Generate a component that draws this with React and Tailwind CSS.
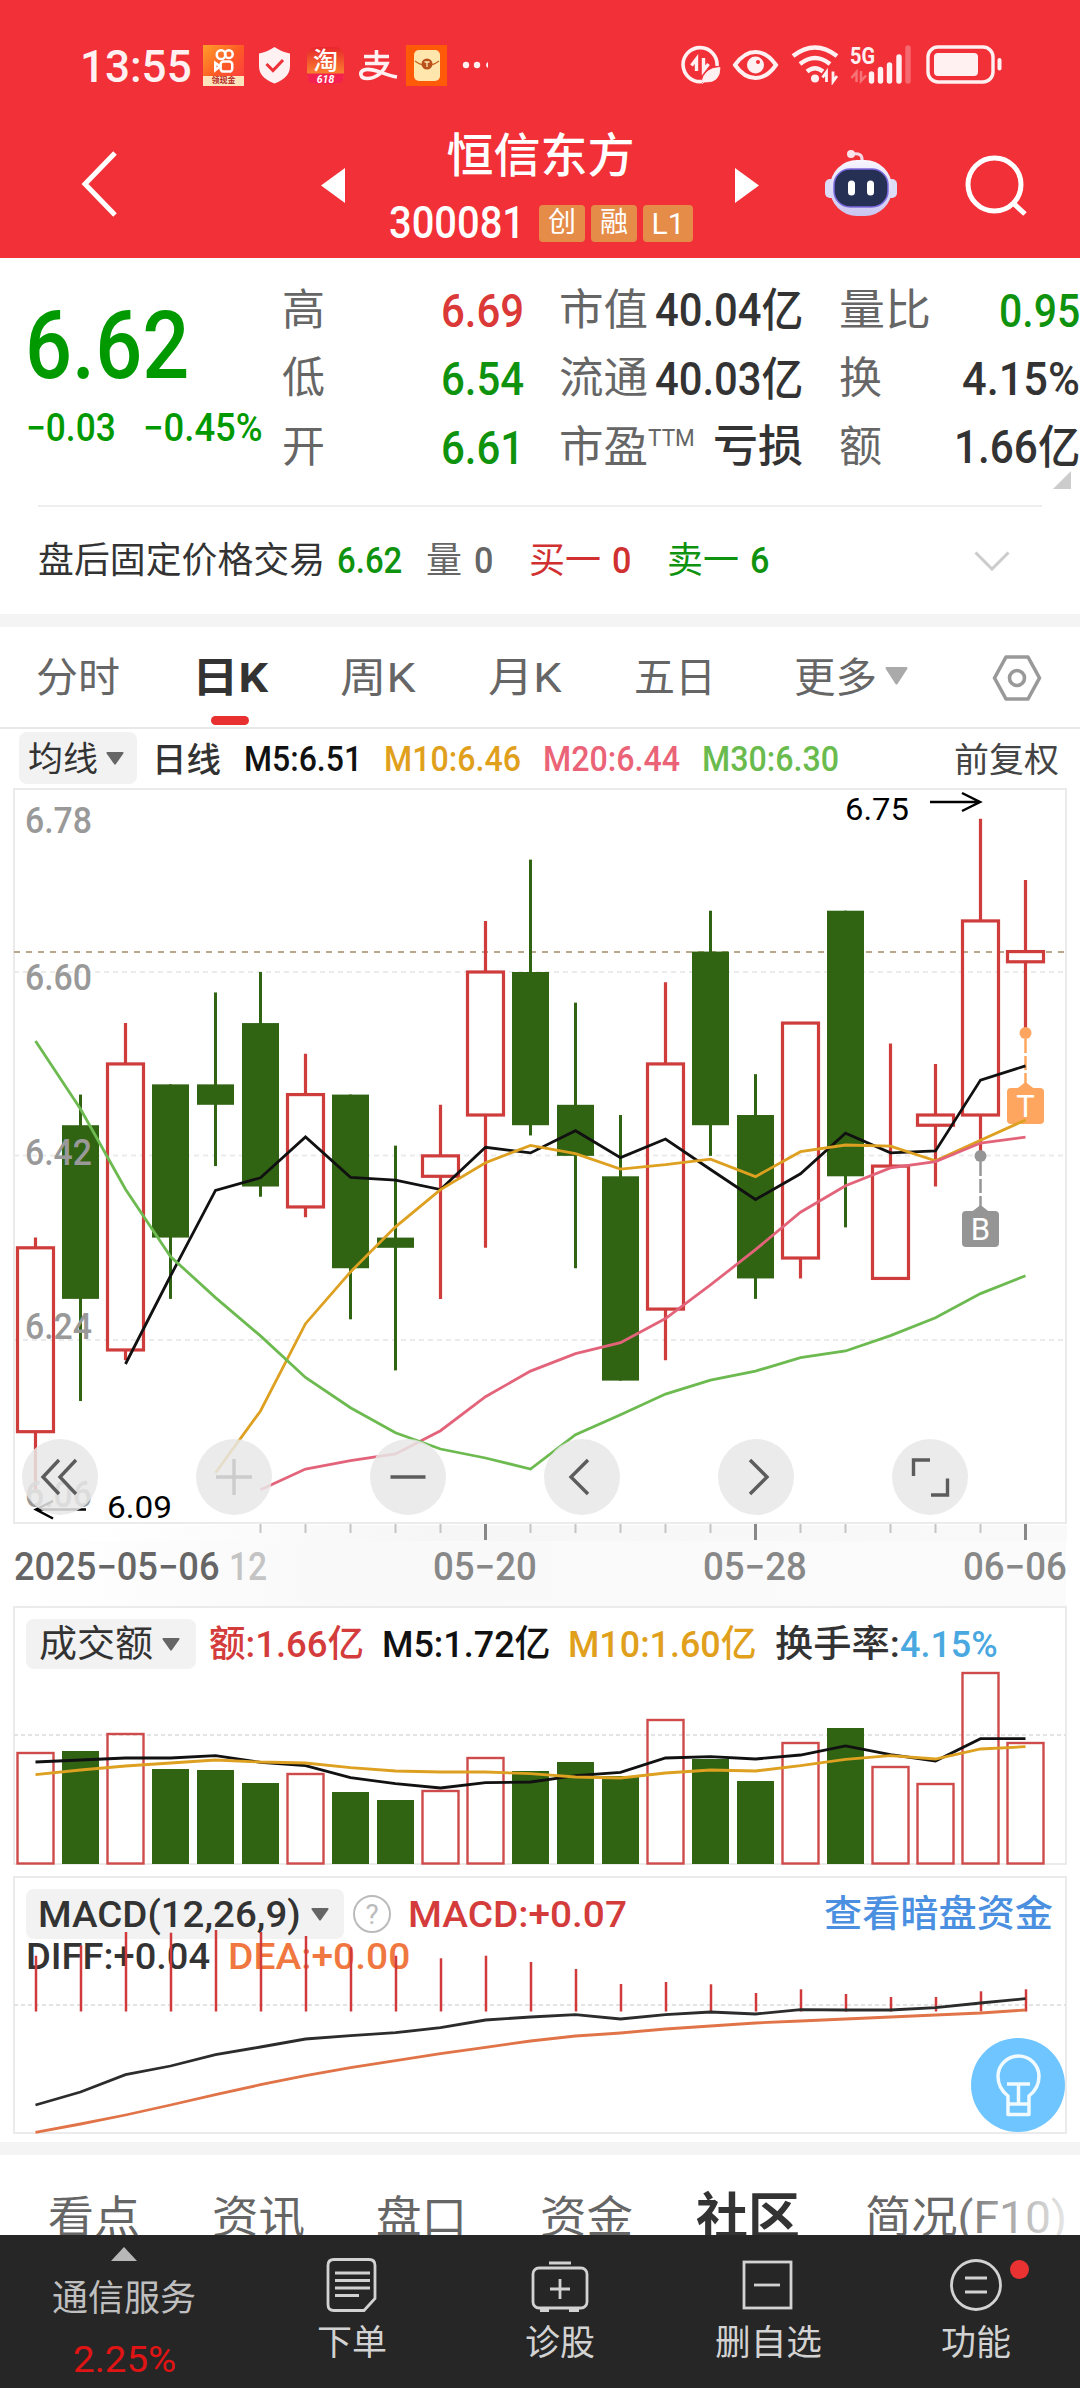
import { useLayoutEffect, useRef } from "react";

// [high, bodyTop, bodyBottom, low, isUp] in cents
const candles = [
    [634, 633, 615, 609, true],
    [648, 645, 628, 618, false],
    [655, 651, 623, 622, true],
    [649, 649, 634, 628, false],
    [658, 649, 647, 641, false],
    [660, 655, 639, 638, false],
    [652, 648, 637, 636, true],
    [648, 648, 631, 626, false],
    [643, 634, 633, 621, false],
    [647, 642, 640, 628, true],
    [665, 660, 646, 633, true],
    [671, 660, 645, 644, false],
    [657, 647, 642, 631, false],
    [646, 640, 620, 620, false],
    [659, 651, 627, 622, true],
    [666, 662, 645, 642, false],
    [650, 646, 630, 628, false],
    [655, 655, 632, 630, true],
    [666, 666, 640, 635, false],
    [653, 641, 630, 630, true],
    [651, 646, 645, 639, true],
    [675, 665, 646, 642, true],
    [669, 662, 661, 654, true],
];

const ma5 = [1364, 1276, 1190.4, 1177.8, 1137, 1177.4, 1180.2, 1189.6, 1147.3, 1152.9, 1130.7, 1157.6, 1139, 1169.5, 1199.5, 1173.8, 1133.1, 1152.9, 1150.9, 1080.1, 1065.9];
const ma10 = [1472.7, 1411, 1323.7, 1271.9, 1226.8, 1189.6, 1162.8, 1145.4, 1153.7, 1169.1, 1164.7, 1159.2, 1176.6, 1151.7, 1145, 1146.2, 1160.8, 1140.2, 1120];
const ma20 = [1489.7, 1469, 1460.7, 1454, 1430.7, 1396.7, 1371.1, 1353.7, 1342.7, 1318.6, 1284.9, 1249.7, 1212.2, 1185.7, 1167.9, 1161.6, 1143, 1137.1];
const ma30 = [1041, 1109, 1189.3, 1256.5, 1297.6, 1335.9, 1377.5, 1407.7, 1432.7, 1449, 1458, 1469, 1434.7, 1414.7, 1394.1, 1380.2, 1371.1, 1357.7, 1351, 1335.6, 1317.8, 1293.6, 1275.8];

const volTops = [153, 151, 134, 169, 170, 183, 174, 192, 200, 191, 158, 171, 162, 176, 120, 159, 181, 143, 128, 167, 184, 73, 143];
const volMa5 = [162, 160, 158, 158, 155.7, 162.3, 165.7, 177.7, 183.7, 188, 182.7, 182, 175.7, 172.3, 158, 156.7, 159, 155, 146, 154.7, 161, 138.7, 138.7];
const volMa10 = [174.7, 170, 166, 163, 160, 162, 163, 167.7, 171, 172, 172, 173.7, 177, 178, 173, 170, 171, 165.7, 159.3, 155.7, 159, 149, 146.7];

const macdTops = [85.7, 75.3, 62, 62.7, 60, 62, 66, 77.3, 85.7, 88.3, 85.7, 92, 99, 114, 112, 114.3, 123, 119.3, 124, 127, 127, 121.3, 119.3];
const diff = [235, 222, 204.7, 196, 184.7, 177, 169, 165.7, 162.7, 157.7, 150, 147, 144.7, 149, 144.7, 142, 144, 139.7, 140, 140, 137.7, 133, 128.7];
const dea = [262.3, 254, 245, 235, 224.7, 214.7, 205.7, 197.7, 190.7, 183.7, 177.3, 171, 166, 163, 159, 156, 153, 151, 149, 147, 145, 143, 140];

const cx = (i) => 35.5 + i * 45;
const py = (p) => 972 + (660 - p) * 10.215;
const line = (values, start = 0) => values.map((v, i) => `${cx(i + start)},${v}`).join(" ");

// Squeezes or stretches its text to fill the width of the box
function Fit({ className = "", children }) {
    const outer = useRef(null);
    const inner = useRef(null);

    useLayoutEffect(() => {
        const scale = outer.current.clientWidth / inner.current.offsetWidth;
        inner.current.style.transform = `scaleX(${scale})`;
    }, []);

    return (
        <span ref={outer} className={`block shrink-0 whitespace-nowrap leading-none ${className}`}>
            <span ref={inner} className="inline-block origin-left">{children}</span>
        </span>
    );
}

function Down({ className }) {
    return (
        <svg viewBox="0 0 20 14" className={`shrink-0 ${className}`} preserveAspectRatio="none">
            <path d="M1.5 0h17q1.5 0 .8 1.5L11 13q-1 1.400-2 0L.7 1.500Q0 0 1.500 0z" fill="currentColor" />
        </svg>
    );
}

function StatusBar() {
    return (
        <div className="flex h-[90px] items-start pt-[45px] pl-[80px] text-[#fff0f1]">
            <Fit className="mt-[-1px] w-[112px] pt-[1px] text-[44px] font-medium">13:55</Fit>
            <div className="ml-[11px] flex h-[41px] w-[41px] flex-col items-center justify-between bg-linear-to-br from-[#ff9d2a] via-[#ff5a25] to-[#fb3340]">
                <svg width="41" height="30" viewBox="0 0 41 31" fill="none" stroke="#fff" strokeWidth="2.600">
                    <circle cx="18" cy="10" r="4.500" />
                    <circle cx="26" cy="9.500" r="4" />
                    <rect x="17.500" y="17" width="12" height="10.500" rx="3" />
                    <path d="M17 22l-5-3.500v7.500z" />
                </svg>
                <div className="h-[10px] w-full bg-[#ffe3bd] text-center text-[8px] leading-[10px] font-bold text-[#b3261e]">领现金</div>
            </div>
            <svg className="ml-[14px] mt-[2px]" width="33" height="37" viewBox="0 0 33 37">
                <path d="M16.500 0Q24 5 32 6.500V19Q32 31 16.500 36.500Q1 31 1 19V6.500Q9 5 16.500 0z" fill="currentColor" />
                <path d="M8.500 17l6.500 6.500L25 13" fill="none" stroke="#f03038" strokeWidth="3" />
            </svg>
            <svg className="ml-[16px] mt-[2px]" width="37" height="37" viewBox="0 0 37 37">
                <defs>
                    <linearGradient id="taoBg" x1="0" y1="0" x2="0" y2="1">
                        <stop offset="0" stopColor="#e8262c" />
                        <stop offset="1" stopColor="#ffa530" />
                    </linearGradient>
                </defs>
                <rect width="37" height="37" rx="9" fill="url(#taoBg)" />
                <path d="M0 26.500h37v1.500q0 9-9 9H9q-9 0-9-9z" fill="#f4214f" />
                <text x="18.500" y="23" fontSize="25" fontWeight="500" fill="#fff" textAnchor="middle">淘</text>
                <text x="18.500" y="35.500" fontSize="10.500" fontWeight="700" fontStyle="italic" fill="#fff" textAnchor="middle">618</text>
            </svg>
            <svg className="ml-[14px] mt-[5px]" width="40" height="32" viewBox="0 0 40 32" fill="none" stroke="currentColor" strokeWidth="3.600">
                <path d="M6 6.500h25M18.500 0v13M7 13.500h22C26 21 19 28.500 9 28.500C2 28.500 1 22 6 20C14 17 26 25 39 27" />
            </svg>
            <div className="ml-[8px] flex h-[41px] w-[41px] items-center justify-center bg-[#ff5a08]">
                <svg width="26" height="31" viewBox="0 0 26 31">
                    <rect width="26" height="31" rx="5" fill="#ffe6ad" />
                    <path d="M1 11Q13 20 25 11" fill="none" stroke="#c8681f" strokeWidth="1.500" />
                    <circle cx="13" cy="14" r="5.500" fill="#b8511a" />
                    <path d="M10.500 12h5M13 12v5" stroke="#ffe6ad" strokeWidth="1.300" />
                </svg>
            </div>
            <svg className="ml-[15px] mt-[16px]" width="26" height="8" viewBox="0 0 26 8" fill="currentColor">
                <circle cx="4" cy="4" r="3.200" />
                <circle cx="15" cy="4" r="3.200" />
                <path d="M26 1v6q-2-1-2-3t2-3z" />
            </svg>

            <svg className="ml-[193px]" width="334" height="40" viewBox="682 45 334 40" fill="none" stroke="currentColor">
                <path d="M703 81.500A17 17 0 1 1 718 66" strokeWidth="3.600" />
                <path d="M697.500 71V59l-5 6.500M704.500 58v12.500l5-6.500" strokeWidth="3.400" />
                <path d="M703 82Q705 68 721 67.500Q721 83 706 82zM703 84l10-10" fill="currentColor" strokeWidth=".8" />
                <path d="M736 65Q745 52 756.500 52T777 65Q768 78 756.500 78T736 65z" strokeWidth="4" />
                <circle cx="756.500" cy="65" r="8.500" fill="currentColor" stroke="none" />
                <circle cx="759" cy="62" r="2" fill="#f03038" stroke="none" />
                <path d="M794 56Q816 39 838 56M801 64Q816 52 831 64M808 71.500Q816 65 824 71.500" strokeWidth="4.400" />
                <circle cx="816" cy="78.500" r="4" fill="currentColor" stroke="none" />
                <path d="M827.500 82V72l-4 5.500M834 71.500v10l4-5.500" strokeWidth="2.800" />
                <text x="851" y="64" fontSize="24" fontWeight="700" fill="currentColor" stroke="none" textLength="25" lengthAdjust="spacingAndGlyphs">5G</text>
                <path d="M857.500 82V72l-5 6M862 71v10l5-5.500" strokeWidth="2.500" opacity=".35" />
                <path d="M872.500 74v7M881.500 69.500v11.500M890.500 65v16M900 57v24" strokeWidth="5.400" strokeLinecap="round" />
                <path d="M909 48v33" strokeWidth="5.400" strokeLinecap="round" opacity=".3" />
                <rect x="929" y="47" width="65" height="35" rx="10" strokeWidth="3.400" />
                <rect x="935" y="53" width="44" height="23" rx="4" fill="currentColor" stroke="none" />
                <rect x="998.500" y="58" width="4" height="12.500" rx="2" fill="currentColor" stroke="none" />
            </svg>
        </div>
    );
}

function Header() {
    return (
        <header className="h-[258px] bg-[#f13038] text-white">
            <StatusBar />
            <div className="flex h-[168px] pl-[80px]">
                <svg className="mt-[60px]" width="40" height="68" viewBox="0 0 40 68" fill="none" stroke="#fff" strokeWidth="5">
                    <path d="M35 3L5 34l30 31" />
                </svg>
                <svg className="ml-[201px] mt-[78px]" width="25" height="35" viewBox="0 0 25 35" fill="#fff"><path d="M24 0v35L0 17.500z" /></svg>
                <div className="ml-[43px] flex w-[303px] flex-col items-center pt-[42px]">
                    <Fit className="w-[188px] text-[47px] font-medium">恒信东方</Fit>
                    <div className="mt-[22px] flex items-center gap-[6px] self-start">
                        <Fit className="mr-[8px] w-[136px] text-[44px] font-medium">300081</Fit>
                        <span className="h-[37px] w-[46px] rounded-[4px] bg-[#e58c49] text-center text-[28px] leading-[35px]">创</span>
                        <span className="h-[37px] w-[46px] rounded-[4px] bg-[#e58c49] text-center text-[28px] leading-[35px]">融</span>
                        <span className="h-[37px] w-[50px] rounded-[4px] bg-[#e58c49] text-center text-[30px] leading-[37px]">L1</span>
                    </div>
                </div>
                <svg className="ml-[43px] mt-[78px]" width="25" height="35" viewBox="0 0 25 35" fill="#fff"><path d="M0 0v35l24-17.500z" /></svg>
                <svg className="ml-[65px] mt-[58px]" width="74" height="70" viewBox="0 0 74 70">
                    <defs>
                        <linearGradient id="helmet" x1="0" y1="0" x2="0" y2="1">
                            <stop offset="0" stopColor="#f8f6ff" />
                            <stop offset="1" stopColor="#c9c5f0" />
                        </linearGradient>
                    </defs>
                    <path d="M27 6Q38 4 37 13" fill="none" stroke="#f5d9e6" strokeWidth="3" />
                    <circle cx="26" cy="6" r="4" fill="#fbe4ec" />
                    <rect x="0" y="31" width="12" height="19" rx="5" fill="#dddcf7" />
                    <rect x="60" y="31" width="12" height="19" rx="5" fill="#dddcf7" />
                    <rect x="5" y="12" width="62" height="56" rx="27" fill="url(#helmet)" />
                    <rect x="9" y="21" width="54" height="38" rx="16" fill="#263055" stroke="#7d6ae0" strokeWidth="1.500" />
                    <rect x="23" y="32.500" width="7" height="15" rx="3.500" fill="#fff" />
                    <rect x="42" y="32.500" width="7" height="15" rx="3.500" fill="#fff" />
                </svg>
                <svg className="ml-[64px] mt-[65px]" width="66" height="66" viewBox="0 0 66 66" fill="none" stroke="#fff" strokeWidth="5">
                    <circle cx="31.500" cy="29.500" r="26.500" />
                    <path d="M50 48l12 11" />
                </svg>
            </div>
        </header>
    );
}

function Quote() {
    return (
        <section className="flex h-[247px] text-[43px] text-[#666]">
            <div className="w-[282px] pl-[25px] text-[#009900]">
                <Fit className="mt-[40px] w-[164px] text-[95px] font-medium">6.62</Fit>
                <div className="mt-[16px] flex text-[38px] font-medium">
                    <Fit className="ml-[1px] w-[90px]">−0.03</Fit>
                    <Fit className="ml-[27px] w-[120px]">−0.45%</Fit>
                </div>
            </div>
            <div className="grid w-[242px] auto-rows-[68.5px] content-start items-center pt-[18px]">
                <div className="flex items-center justify-between"><span className="leading-none">高</span><Fit className="w-[83px] text-[47px] font-medium text-[#db3838]">6.69</Fit></div>
                <div className="flex items-center justify-between"><span className="leading-none">低</span><Fit className="w-[83px] text-[47px] font-medium text-[#0f930f]">6.54</Fit></div>
                <div className="flex items-center justify-between"><span className="leading-none">开</span><Fit className="w-[83px] text-[47px] font-medium text-[#0f930f]">6.61</Fit></div>
            </div>
            <div className="ml-[35px] grid w-[244px] auto-rows-[68.5px] content-start items-center pt-[18px]">
                <div className="flex items-center justify-between"><Fit className="w-[89px]">市值</Fit><Fit className="w-[148px] text-[46px] font-medium text-[#333]">40.04亿</Fit></div>
                <div className="flex items-center justify-between"><Fit className="w-[89px]">流通</Fit><Fit className="w-[148px] text-[46px] font-medium text-[#333]">40.03亿</Fit></div>
                <div className="flex items-center">
                    <Fit className="w-[89px]">市盈</Fit>
                    <Fit className="mt-[-18px] w-[47px] text-[24px]">TTM</Fit>
                    <Fit className="ml-auto w-[90px] text-[44px] font-medium text-[#333]">亏损</Fit>
                </div>
            </div>
            <div className="relative ml-[36px] grid w-[241px] auto-rows-[68.5px] content-start items-center pt-[18px]">
                <div className="flex items-center justify-between"><Fit className="w-[92px]">量比</Fit><Fit className="w-[81px] text-[47px] font-medium text-[#0f930f]">0.95</Fit></div>
                <div className="flex items-center justify-between"><span className="leading-none">换</span><Fit className="w-[118px] text-[47px] font-medium text-[#333]">4.15%</Fit></div>
                <div className="flex items-center justify-between"><span className="leading-none">额</span><Fit className="w-[126px] text-[46px] font-medium text-[#333]">1.66亿</Fit></div>
                <svg className="absolute right-[9px] bottom-[16px]" width="18" height="18" viewBox="0 0 18 18"><path d="M18 0v18H0z" fill="#ccc" /></svg>
            </div>
        </section>
    );
}

function AfterHours() {
    return (
        <section className="mx-[38px] flex h-[109px] items-center border-t-2 border-[#eee] pt-[1px] text-[36px]">
            <Fit className="w-[287px] text-[#333]">盘后固定价格交易</Fit>
            <Fit className="ml-[12px] w-[65px] font-medium text-[#0f930f]">6.62</Fit>
            <Fit className="ml-[24px] w-[36px] text-[#666]">量</Fit>
            <Fit className="ml-[12px] w-[19px] font-medium text-[#666]">0</Fit>
            <Fit className="ml-[36px] w-[72px] text-[#d03030]">买一</Fit>
            <Fit className="ml-[11px] w-[19px] font-medium text-[#d03030]">0</Fit>
            <Fit className="ml-[36px] w-[72px] text-[#0f930f]">卖一</Fit>
            <Fit className="ml-[11px] w-[19px] font-medium text-[#0f930f]">6</Fit>
            <svg className="ml-[205px] shrink-0" width="36" height="20" viewBox="0 0 36 20" fill="none" stroke="#ccc" strokeWidth="3">
                <path d="M1.500 1.500L18 18 34.500 1.500" />
            </svg>
        </section>
    );
}

function PeriodTabs() {
    return (
        <nav className="flex h-[102px] items-center border-b-2 border-[#e8e8e8] pt-[3px] pl-[36px] text-[41px] text-[#666]">
            <Fit className="w-[84px]">分时</Fit>
            <div className="relative ml-[72px]">
                <Fit className="w-[76px] font-bold text-[#333]">日K</Fit>
                <span className="absolute top-[58px] left-[19px] h-[9px] w-[38px] rounded-full bg-[#e83030]" />
            </div>
            <Fit className="ml-[72px] w-[76px]">周K</Fit>
            <Fit className="ml-[72px] w-[74px]">月K</Fit>
            <Fit className="ml-[72px] w-[82px]">五日</Fit>
            <Fit className="ml-[78px] w-[83px]">更多</Fit>
            <Down className="mt-[-6px] ml-[8px] h-[18px] w-[23px] text-[#aaa]" />
            <svg className="mt-[-2px] ml-[84px] shrink-0" width="50" height="46" viewBox="0 0 50 46" fill="none" stroke="#999" strokeWidth="3.600" strokeLinejoin="round">
                <path d="M14 2h22l11.500 21L36 44H14L2.500 23z" />
                <circle cx="25" cy="23" r="7.500" />
            </svg>
        </nav>
    );
}

function MaLegend() {
    return (
        <div className="flex h-[58px] items-center pt-[3px] pl-[19px] text-[35px]">
            <div className="mt-[-3px] flex h-[52px] w-[118px] items-center rounded-[8px] bg-[#f2f2f2] pl-[9px] text-[#333]">
                <Fit className="mt-[2px] w-[70px] text-[34px]">均线</Fit>
                <Down className="ml-[8px] h-[13px] w-[18px] text-[#666]" />
            </div>
            <Fit className="ml-[15px] w-[69px] text-[34px] font-medium text-[#333]">日线</Fit>
            <Fit className="ml-[23px] w-[118px] font-medium text-[#111]">M5:6.51</Fit>
            <Fit className="ml-[22px] w-[137px] font-medium text-[#e0a01c]">M10:6.46</Fit>
            <Fit className="ml-[22px] w-[137px] font-medium text-[#ea6377]">M20:6.44</Fit>
            <Fit className="ml-[22px] w-[137px] font-medium text-[#6abb4e]">M30:6.30</Fit>
            <Fit className="ml-[115px] w-[105px] text-[34px] text-[#444]">前复权</Fit>
        </div>
    );
}

function Marker({ x, y, letter, color }) {
    return (
        <g>
            <circle cx={x} cy={y} r="6" fill={color} />
            <path d={`M${x} ${y + 6}v45`} stroke={color} strokeWidth="2.500" strokeDasharray="14 3" />
            <path d={`M${x - 9} ${y + 56}l9-7 9 7z`} fill={color} />
            <rect x={x - 18.5} y={y + 55} width="37" height="36" rx="4" fill={color} />
            <text x={x} y={y + 84} fontSize="31" fill="#fff" textAnchor="middle">{letter}</text>
        </g>
    );
}

function CircleButton({ faded, children }) {
    return (
        <button className="flex h-[76px] w-[76px] items-center justify-center rounded-full bg-[#e8e8e8]/85">
            <svg width="40" height="40" viewBox="0 0 40 40" fill="none" stroke={faded ? "#ccc" : "#5c5c5c"} strokeWidth="3.400">{children}</svg>
        </button>
    );
}

function KChart() {
    const priceLabels = [["6.78", 832.5], ["6.60", 989.5], ["6.42", 1164.5], ["6.24", 1338.5], ["6.06", 1506.5]];

    return (
        <section className="relative h-[819px]">
            <svg className="block" width="1080" height="754" viewBox="0 787 1080 754">
                <defs>
                    <linearGradient id="axisShade" x1="0" y1="0" x2="1" y2="0">
                        <stop offset="0" stopColor="#f6f6f6" stopOpacity="0" />
                        <stop offset=".35" stopColor="#f6f6f6" />
                        <stop offset="1" stopColor="#f9f9f9" />
                    </linearGradient>
                </defs>
                <rect x="100" y="1525" width="967" height="16" fill="url(#axisShade)" />
                <rect x="14" y="789" width="1052" height="734" fill="none" stroke="#ebebeb" strokeWidth="2" />
                {[972, 1155.500, 1340].map((y) => (
                    <path key={y} d={`M14 ${y}H1066`} stroke="#ebebeb" strokeWidth="2" strokeDasharray="5 4" />
                ))}
                <path d="M14 952H1066" stroke="#b9a98c" strokeWidth="2" strokeDasharray="6 6" />

                {candles.map(([high, top, bottom, low, up], i) =>
                    up ? (
                        <g key={i} stroke="#cf3c3c" strokeWidth="3.200" fill="none">
                            <path d={`M${cx(i)} ${py(high)}V${py(top)}M${cx(i)} ${py(bottom)}V${py(low)}`} />
                            <rect x={cx(i) - 18} y={py(top)} width="36" height={py(bottom) - py(top)} />
                        </g>
                    ) : (
                        <g key={i} fill="#306413">
                            <rect x={cx(i) - 1.5} y={py(high)} width="3" height={py(low) - py(high)} />
                            <rect x={cx(i) - 18.5} y={py(top)} width="37" height={py(bottom) - py(top)} />
                        </g>
                    )
                )}

                {priceLabels.map(([label, y]) => (
                    <text key={label} x="25" y={y} fontSize="36" fontWeight="500" fill="#999" textLength="67" lengthAdjust="spacingAndGlyphs">{label}</text>
                ))}

                <Marker x={1025.5} y={1033} letter="T" color="#fea660" />
                <Marker x={980.5} y={1156} letter="B" color="#959595" />

                <g fill="none" strokeWidth="2.800">
                    <polyline points={line(ma5, 2)} stroke="#111" />
                    <polyline points={line(ma10, 4)} stroke="#dda020" />
                    <polyline points={line(ma20, 5)} stroke="#e3647a" />
                    <polyline points={line(ma30)} stroke="#6cba50" />
                </g>

                <text x="845" y="819.500" fontSize="31" textLength="64" lengthAdjust="spacingAndGlyphs">6.75</text>
                <path d="M930 802h50M962 793l18 9-18 9" fill="none" stroke="#000" strokeWidth="2.500" />
                <text x="107" y="1518" fontSize="32" textLength="65" lengthAdjust="spacingAndGlyphs">6.09</text>
                <path d="M86 1509.500H36M53 1501l-17 8.500 17 9" fill="none" stroke="#000" strokeWidth="2.500" />

                {candles.map((_, i) => {
                    if (i < 5) return null;
                    const major = i === 10 || i === 16 || i === 22;
                    return <path key={i} d={`M${cx(i)} 1524v${major ? 16 : 9}`} stroke={major ? "#888" : "#c4c4c4"} strokeWidth={major ? 3 : 2} />;
                })}
            </svg>

            <div className="absolute top-[652px] left-[22px] flex gap-[98px]">
                <CircleButton><path d="M19 3L3 20l16 17M36 3L20 20l16 17" /></CircleButton>
                <CircleButton faded><path d="M20 2v36M2 20h36" /></CircleButton>
                <CircleButton><path d="M2.500 20h35" /></CircleButton>
                <CircleButton><path d="M26 3L9 20l17 17" /></CircleButton>
                <CircleButton><path d="M14 3l17 17-17 17" /></CircleButton>
                <CircleButton><path d="M3.500 19V3H20M37.500 21.500V38H21" /></CircleButton>
            </div>

            <div className="mx-[14px] flex h-[65px] items-start bg-linear-to-r from-white via-[#f9f9f9] via-30% to-[#fbfbfb] pt-[7px] text-[38px] font-medium text-[#888]">
                <Fit className="w-[206px] text-[#666]">2025−05−06</Fit>
                <Fit className="ml-[9px] w-[38px] text-[#c4c4c4]">12</Fit>
                <Fit className="ml-[166px] w-[104px]">05−20</Fit>
                <Fit className="ml-[166px] w-[104px]">05−28</Fit>
                <Fit className="ml-[156px] w-[104px]">06−06</Fit>
            </div>
        </section>
    );
}

function VolumePanel() {
    return (
        <section className="relative h-[270px]">
            <svg className="absolute inset-0" width="1080" height="270" viewBox="0 6 1080 270" fill="none">
                <rect x="14" y="7" width="1052" height="257" stroke="#ebebeb" strokeWidth="2" />
                <path d="M14 135H1066" stroke="#e3e3e3" strokeWidth="2" strokeDasharray="4 3" />
                {volTops.map((top, i) =>
                    candles[i][4] ? (
                        <rect key={i} x={cx(i) - 18} y={top} width="36" height={263.5 - top} stroke="#cf4a4a" strokeWidth="2.400" />
                    ) : (
                        <rect key={i} x={cx(i) - 18.5} y={top} width="37" height={264 - top} fill="#306413" />
                    )
                )}
                <polyline points={line(volMa5)} stroke="#111" strokeWidth="2.800" />
                <polyline points={line(volMa10)} stroke="#dda020" strokeWidth="2.800" />
            </svg>
            <div className="relative flex items-center pt-[13px] pl-[26px] text-[37px]">
                <div className="flex h-[50px] w-[170px] items-center rounded-[8px] bg-[#f2f2f2] pl-[13px] text-[#333]">
                    <Fit className="w-[114px]">成交额</Fit>
                    <Down className="ml-[9px] h-[13px] w-[18px] text-[#666]" />
                </div>
                <Fit className="ml-[13px] w-[155px] font-medium text-[#d43c3c]">额:1.66亿</Fit>
                <Fit className="ml-[18px] w-[169px] font-medium text-[#111]">M5:1.72亿</Fit>
                <Fit className="ml-[17px] w-[189px] font-medium text-[#e0a01c]">M10:1.60亿</Fit>
                <Fit className="ml-[18px] w-[125px] font-medium text-[#333]">换手率:</Fit>
                <Fit className="w-[98px] font-medium text-[#4aa8e0]">4.15%</Fit>
            </div>
        </section>
    );
}

function MacdPanel() {
    return (
        <section className="relative h-[266px]">
            <svg className="absolute inset-0" width="1080" height="266" viewBox="0 6 1080 266" fill="none">
                <rect x="14" y="7" width="1052" height="256" stroke="#ebebeb" strokeWidth="2" />
                <path d="M14 135H1066" stroke="#e3e3e3" strokeWidth="2" strokeDasharray="4 3" />
            </svg>
            <div className="relative flex items-center pt-[13px] pl-[26px] text-[37px]">
                <div className="flex h-[50px] w-[318px] items-center rounded-[8px] bg-[#f2f2f2] pl-[12px] text-[#333]">
                    <Fit className="w-[263px] font-medium">MACD(12,26,9)</Fit>
                    <Down className="ml-[10px] h-[13px] w-[18px] text-[#666]" />
                </div>
                <span className="ml-[9px] h-[38px] w-[38px] rounded-full border-2 border-[#bbb] text-center text-[28px] leading-[35px] text-[#bbb]">?</span>
                <Fit className="ml-[17px] w-[219px] font-medium text-[#d43c3c]">MACD:+0.07</Fit>
                <Fit className="ml-[197px] w-[229px] font-medium text-[#4a8fe0]">查看暗盘资金</Fit>
            </div>
            <div className="relative mt-[-1px] flex pl-[26px] text-[37px]">
                <Fit className="w-[184px] font-medium text-[#333]">DIFF:+0.04</Fit>
                <Fit className="ml-[18px] w-[182px] font-medium text-[#f07840]">DEA:+0.00</Fit>
            </div>
            <svg className="absolute inset-0" width="1080" height="266" viewBox="0 6 1080 266" fill="none">
                {macdTops.map((top, i) => (
                    <path key={i} d={`M${cx(i) + 0.5} ${top}V141.500`} stroke="#d03a3a" strokeWidth="2.500" />
                ))}
                <polyline points={line(diff)} stroke="#2c2c2c" strokeWidth="2.800" />
                <polyline points={line(dea)} stroke="#e07448" strokeWidth="2.800" />
            </svg>
            <button className="absolute top-[162px] left-[971px] h-[94px] w-[94px] rounded-full bg-[#6ec5ff]">
                <svg width="94" height="94" viewBox="0 0 94 94" fill="none" stroke="#f0faff" strokeWidth="3.500">
                    <path d="M37 66V58Q27 50 27 38.500A20.500 20.500 0 0 1 68 38.500Q68 50 58 58V66zM37 66v10.500h21V66" strokeLinejoin="round" />
                    <path d="M36 46h23M47.500 46v20" />
                </svg>
            </button>
        </section>
    );
}

function InfoTabs() {
    return (
        <nav className="relative flex h-[80px] items-start overflow-hidden pt-[41px] pl-[48px] text-[44px] text-[#666]">
            <Fit className="w-[92px]">看点</Fit>
            <Fit className="ml-[72px] w-[93px]">资讯</Fit>
            <Fit className="ml-[71px] w-[91px]">盘口</Fit>
            <Fit className="ml-[73px] w-[93px]">资金</Fit>
            <Fit className="mt-[-4px] ml-[63px] w-[104px] text-[51px] font-bold text-[#333]">社区</Fit>
            <Fit className="ml-[65px] w-[202px]">简况(F10)</Fit>
            <span className="absolute top-0 right-0 h-full w-[130px] bg-linear-to-r from-white/0 to-white/95" />
        </nav>
    );
}

function BottomItem({ label, className, children }) {
    return (
        <div className="flex w-[208px] flex-col items-center pt-[22px]">
            <svg width="60" height="56" viewBox="0 0 60 56" fill="none" stroke="#d2d2d2" strokeWidth="2.800">{children}</svg>
            <Fit className={`mt-[13px] text-[35px] ${className}`}>{label}</Fit>
        </div>
    );
}

function BottomBar() {
    return (
        <footer className="flex h-[153px] overflow-hidden bg-[#262626] text-[#d2d2d2]">
            <div className="flex w-[248px] flex-col items-center pt-[12px]">
                <svg width="26" height="14" viewBox="0 0 26 14"><path d="M13 0l13 14H0z" fill="#b8b8b8" /></svg>
                <Fit className="mt-[20px] w-[144px] text-[36px] text-[#bfbfbf]">通信服务</Fit>
                <Fit className="mt-[24px] w-[103px] text-[37px] text-[#e01414]">2.25%</Fit>
            </div>
            <BottomItem label="下单" className="w-[70px]">
                <path d="M12 2.500h35q6 0 6 6v33L42 53.500H12q-6 0-6-6v-39q0-6 6-6zM13 16h35M13 23.500h35M13 31h35M13 38.500h24" />
            </BottomItem>
            <BottomItem label="诊股" className="w-[70px]">
                <rect x="3" y="11" width="54" height="40" rx="6" />
                <path d="M19 6h22M30 22v20M20 32h20M10 53.500h9M39 53.500h10" />
            </BottomItem>
            <BottomItem label="删自选" className="w-[107px]">
                <rect x="6" y="5" width="47" height="46" />
                <path d="M16 28h26" />
            </BottomItem>
            <div className="relative">
                <BottomItem label="功能" className="w-[70px]">
                    <circle cx="30" cy="28" r="24.500" />
                    <path d="M19 21h22M19 35h22" />
                </BottomItem>
                <span className="absolute top-[25px] left-[138px] h-[19px] w-[19px] rounded-full bg-[#ea3232]" />
            </div>
        </footer>
    );
}

export default function App() {
    return (
        <div className="h-[2388px] w-[1080px] overflow-hidden bg-white font-['Roboto','Noto_Sans_CJK_SC',sans-serif]">
            <Header />
            <Quote />
            <AfterHours />
            <div className="h-[13px] bg-[#f4f4f4]" />
            <PeriodTabs />
            <MaLegend />
            <KChart />
            <VolumePanel />
            <MacdPanel />
            <div className="h-[13px] bg-[#f4f4f4]" />
            <InfoTabs />
            <BottomBar />
        </div>
    );
}
